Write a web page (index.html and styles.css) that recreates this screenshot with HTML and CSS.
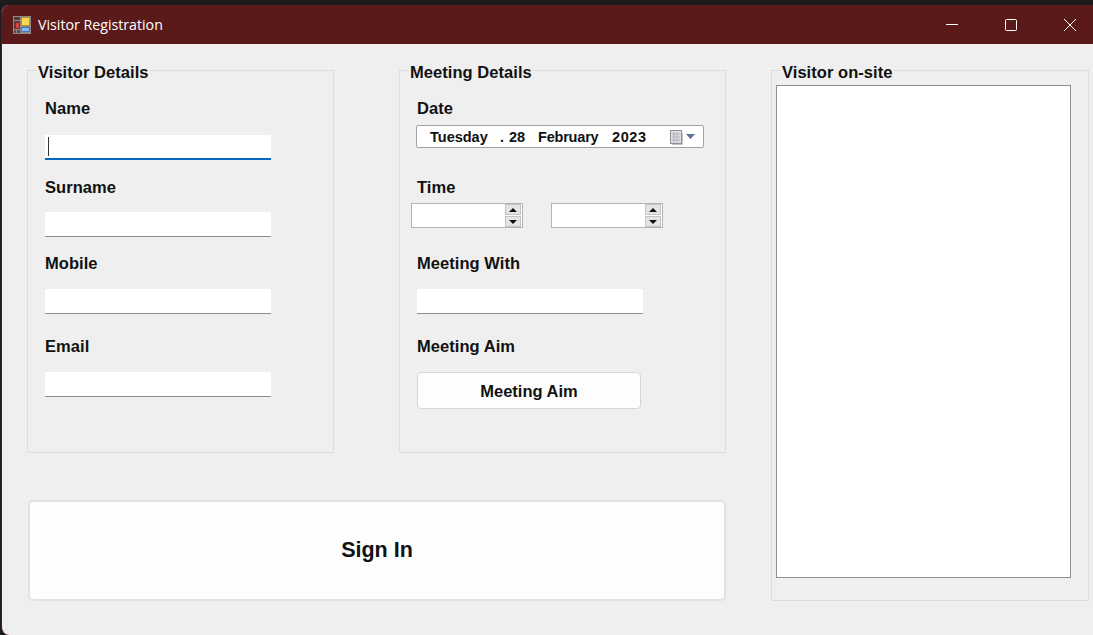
FILE: index.html
```html
<!DOCTYPE html>
<html lang="en">
<head>
  <meta charset="UTF-8" />
  <meta name="viewport" content="width=device-width, initial-scale=1.0"/>
  <title>Visitor Registration</title>
  <link rel="stylesheet" href="styles.css">
</head>
<body>

<div class="window">
  <header class="titlebar">
    <svg class="app-icon" width="18" height="18" viewBox="0 0 18 18">
      <rect width="18" height="18" fill="#8f8a88"/>
      <rect x="1" y="1" width="6" height="3" fill="#5a3a38"/>
      <rect x="1" y="5" width="6" height="8" fill="#6d3532"/>
      <rect x="3" y="7" width="3" height="5" fill="#d8443c"/>
      <rect x="1" y="14" width="2" height="3" fill="#5a4a48"/>
      <rect x="4" y="14" width="3" height="3" fill="#5a4a48"/>
      <rect x="8" y="1" width="9" height="9" fill="#b98f2c"/>
      <rect x="9" y="2" width="7" height="7" fill="#fbd74e"/>
      <rect x="8" y="11" width="9" height="5" fill="#3f76c4"/>
      <rect x="9" y="12" width="7" height="3" fill="#86b7f0"/>
    </svg>
    <span class="title">Visitor Registration</span>
    <div class="win-controls">
      <svg width="14" height="14" viewBox="0 0 14 14"><path d="M1 6.500h12" stroke="#fff" fill="none"/></svg>
      <svg width="14" height="14" viewBox="0 0 14 14"><rect x="1.500" y="1.500" width="11" height="11" rx="1" stroke="#fff" fill="none"/></svg>
      <svg width="14" height="14" viewBox="0 0 14 14"><path d="M1 1l12 12M13 1L1 13" stroke="#fff" fill="none"/></svg>
    </div>
  </header>

  <main class="form">
    <fieldset class="group visitor">
      <legend>Visitor Details</legend>
      <div class="rows">
        <div class="field gap-wide">
          <label for="name">Name</label>
          <div class="caret-wrap">
            <input class="text-input focused" type="text" id="name">
            <span class="caret"></span>
          </div>
        </div>
        <div class="field gap-small">
          <label for="surname">Surname</label>
          <input class="text-input" type="text" id="surname">
        </div>
        <div class="field">
          <label for="mobile">Mobile</label>
          <input class="text-input" type="text" id="mobile">
        </div>
        <div class="field">
          <label for="email">Email</label>
          <input class="text-input" type="text" id="email">
        </div>
      </div>
    </fieldset>

    <fieldset class="group meeting">
      <legend>Meeting Details</legend>
      <div class="rows">
        <div class="field gap-tight">
          <label>Date</label>
          <div class="date-picker">
            <span class="d-day">Tuesday</span>
            <span class="d-comma">.</span>
            <span class="d-num">28</span>
            <span class="d-month">February</span>
            <span class="d-year">2023</span>
            <svg class="cal-icon" width="26" height="16" viewBox="0 0 26 16">
              <rect x="0.500" y="1.500" width="11" height="13" fill="#dcdee2" stroke="#8d9096"/>
              <path d="M2 5h8M2 8h8M2 11h8M4 3v10M7 3v10" stroke="#b2b5ba" fill="none"/>
              <path d="M12.500 4v11.500H2" stroke="#c4c4c4" fill="none"/>
              <path d="M16 5h9l-4.500 5z" fill="#5c6f96"/>
            </svg>
          </div>
        </div>
        <div class="field gap-tight">
          <label>Time</label>
          <div class="spinners">
            <div class="spinner">
              <div class="spin-btns">
                <span class="spin-btn"><i class="tri-up"></i></span>
                <span class="spin-btn"><i class="tri-down"></i></span>
              </div>
            </div>
            <div class="spinner">
              <div class="spin-btns">
                <span class="spin-btn"><i class="tri-up"></i></span>
                <span class="spin-btn"><i class="tri-down"></i></span>
              </div>
            </div>
          </div>
        </div>
        <div class="field">
          <label for="meetingWith">Meeting With</label>
          <input class="text-input" type="text" id="meetingWith">
        </div>
        <div class="field">
          <label>Meeting Aim</label>
          <button class="aim-btn">Meeting Aim</button>
        </div>
      </div>
    </fieldset>

    <fieldset class="group onsite">
      <legend>Visitor on-site</legend>
      <div class="listbox"></div>
    </fieldset>

    <button class="sign-in">Sign In</button>
  </main>
</div>

</body>
</html>
```

FILE: styles.css
```css
* {
  box-sizing: border-box;
}
html, body {
  height: 100%;
}
body {
  margin: 0;
  background: #1c1c1c;
  font-family: "Liberation Sans", Arial, sans-serif;
  overflow: hidden;
}
.window {
  height: 630px;
  margin: 5px 0 0 1px;
  background: #efefef;
  border-left: 1px solid #5a1a1a;
  border-radius: 8px 0 0 8px;
  overflow: hidden;
}
.titlebar {
  display: flex;
  align-items: center;
  height: 39px;
  padding-left: 11px;
  background: #5a1a1a;
  color: white;
}
.app-icon {
  margin-right: 7px;
}
.title {
  font-family: "Open Sans", sans-serif;
  font-size: 14.2px;
}
.win-controls {
  display: flex;
  gap: 45px;
  margin-left: auto;
  margin-right: 16px;
}

.form {
  display: grid;
  grid-template-columns: 372px 372px 318px;
  grid-template-rows: 391px 101px;
  row-gap: 47px;
  padding: 18px 0 0 25px;
}
.group {
  min-width: 0;
  margin: 0;
  padding: 0 0 0 17px;
  border: 1px solid #dddddd;
}
.visitor {
  width: 307px;
}
.meeting {
  width: 327px;
}
legend {
  margin-left: -8px;
  padding: 0 1px;
  height: 16px;
  line-height: 20px;
  font-size: 16.5px;
  letter-spacing: 0.05px;
  font-weight: bold;
  color: #111;
}
.rows {
  display: grid;
  grid-template-rows: 79px 76px 83px auto;
  padding-top: 21px;
}
.field {
  display: flex;
  flex-direction: column;
  align-items: flex-start;
  gap: 15px;
}
.gap-wide { gap: 16px; }
.gap-small { gap: 14px; }
.gap-tight { gap: 6px; }
label {
  height: 20px;
  line-height: 18px;
  font-size: 16.5px;
  letter-spacing: 0.05px;
  font-weight: bold;
  color: #111;
}
.text-input {
  display: block;
  width: 226px;
  height: 25px;
  padding: 0;
  background: white;
  border: none;
  border-bottom: 1px solid #8c8c8c;
  outline: none;
}
.text-input.focused {
  border-bottom: 2px solid #0067c0;
}
.caret-wrap {
  position: relative;
}
.caret {
  position: absolute;
  left: 3px;
  top: 2px;
  width: 1px;
  height: 19px;
  background: #333;
}

.date-picker {
  position: relative;
  display: flex;
  align-items: center;
  width: 288px;
  height: 23px;
  margin-left: -1px;
  background: white;
  border: 1px solid #a0a0a0;
  border-radius: 2px;
  font-size: 14.5px;
  font-weight: bold;
  color: #111;
}
.date-picker span {
  position: absolute;
}
.d-day { left: 13px; }
.d-comma { left: 83px; }
.d-num { left: 92px; }
.d-month { left: 121px; letter-spacing: -0.2px; }
.d-year { left: 195px; letter-spacing: 0.6px; }
.cal-icon {
  position: absolute;
  right: 7px;
  top: 3px;
}

.spinners {
  display: flex;
  gap: 28px;
  margin: -1px 0 0 -6px;
}
.spinner {
  display: flex;
  justify-content: flex-end;
  width: 112px;
  height: 25px;
  background: white;
  border: 1px solid #b4b4b4;
}
.spin-btns {
  display: flex;
  flex-direction: column;
  gap: 1px;
  width: 18px;
  padding: 0 1px;
  background: white;
}
.spin-btn {
  display: flex;
  align-items: center;
  justify-content: center;
  flex: 1;
  background: #e4e4e4;
  border: 1px solid #c4c4c4;
}
.tri-up, .tri-down {
  width: 0;
  height: 0;
  border-left: 4px solid transparent;
  border-right: 4px solid transparent;
}
.tri-up { border-bottom: 4px solid #111; }
.tri-down { border-top: 4px solid #111; }

.aim-btn {
  width: 224px;
  height: 37px;
  padding: 1px 0 0 0;
  background: #fdfdfd;
  border: 1px solid #d5d5d5;
  border-radius: 4px;
  font-family: "Liberation Sans", Arial, sans-serif;
  font-size: 16.5px;
  font-weight: bold;
  color: #111;
}

.onsite {
  grid-column: 3;
  grid-row: 1 / span 2;
  padding-left: 4px;
}
.onsite legend {
  margin-left: 5px;
}
.listbox {
  width: 295px;
  height: 493px;
  margin-top: 7px;
  background: white;
  border: 1px solid #8a8f99;
}

.sign-in {
  grid-column: 1 / span 2;
  grid-row: 2;
  width: 698px;
  margin-left: 1px;
  background: #fdfdfd;
  border: 2px solid #e2e2e2;
  border-radius: 5px;
  font-family: "Liberation Sans", Arial, sans-serif;
  font-size: 21.5px;
  font-weight: bold;
  color: #111;
}
```
